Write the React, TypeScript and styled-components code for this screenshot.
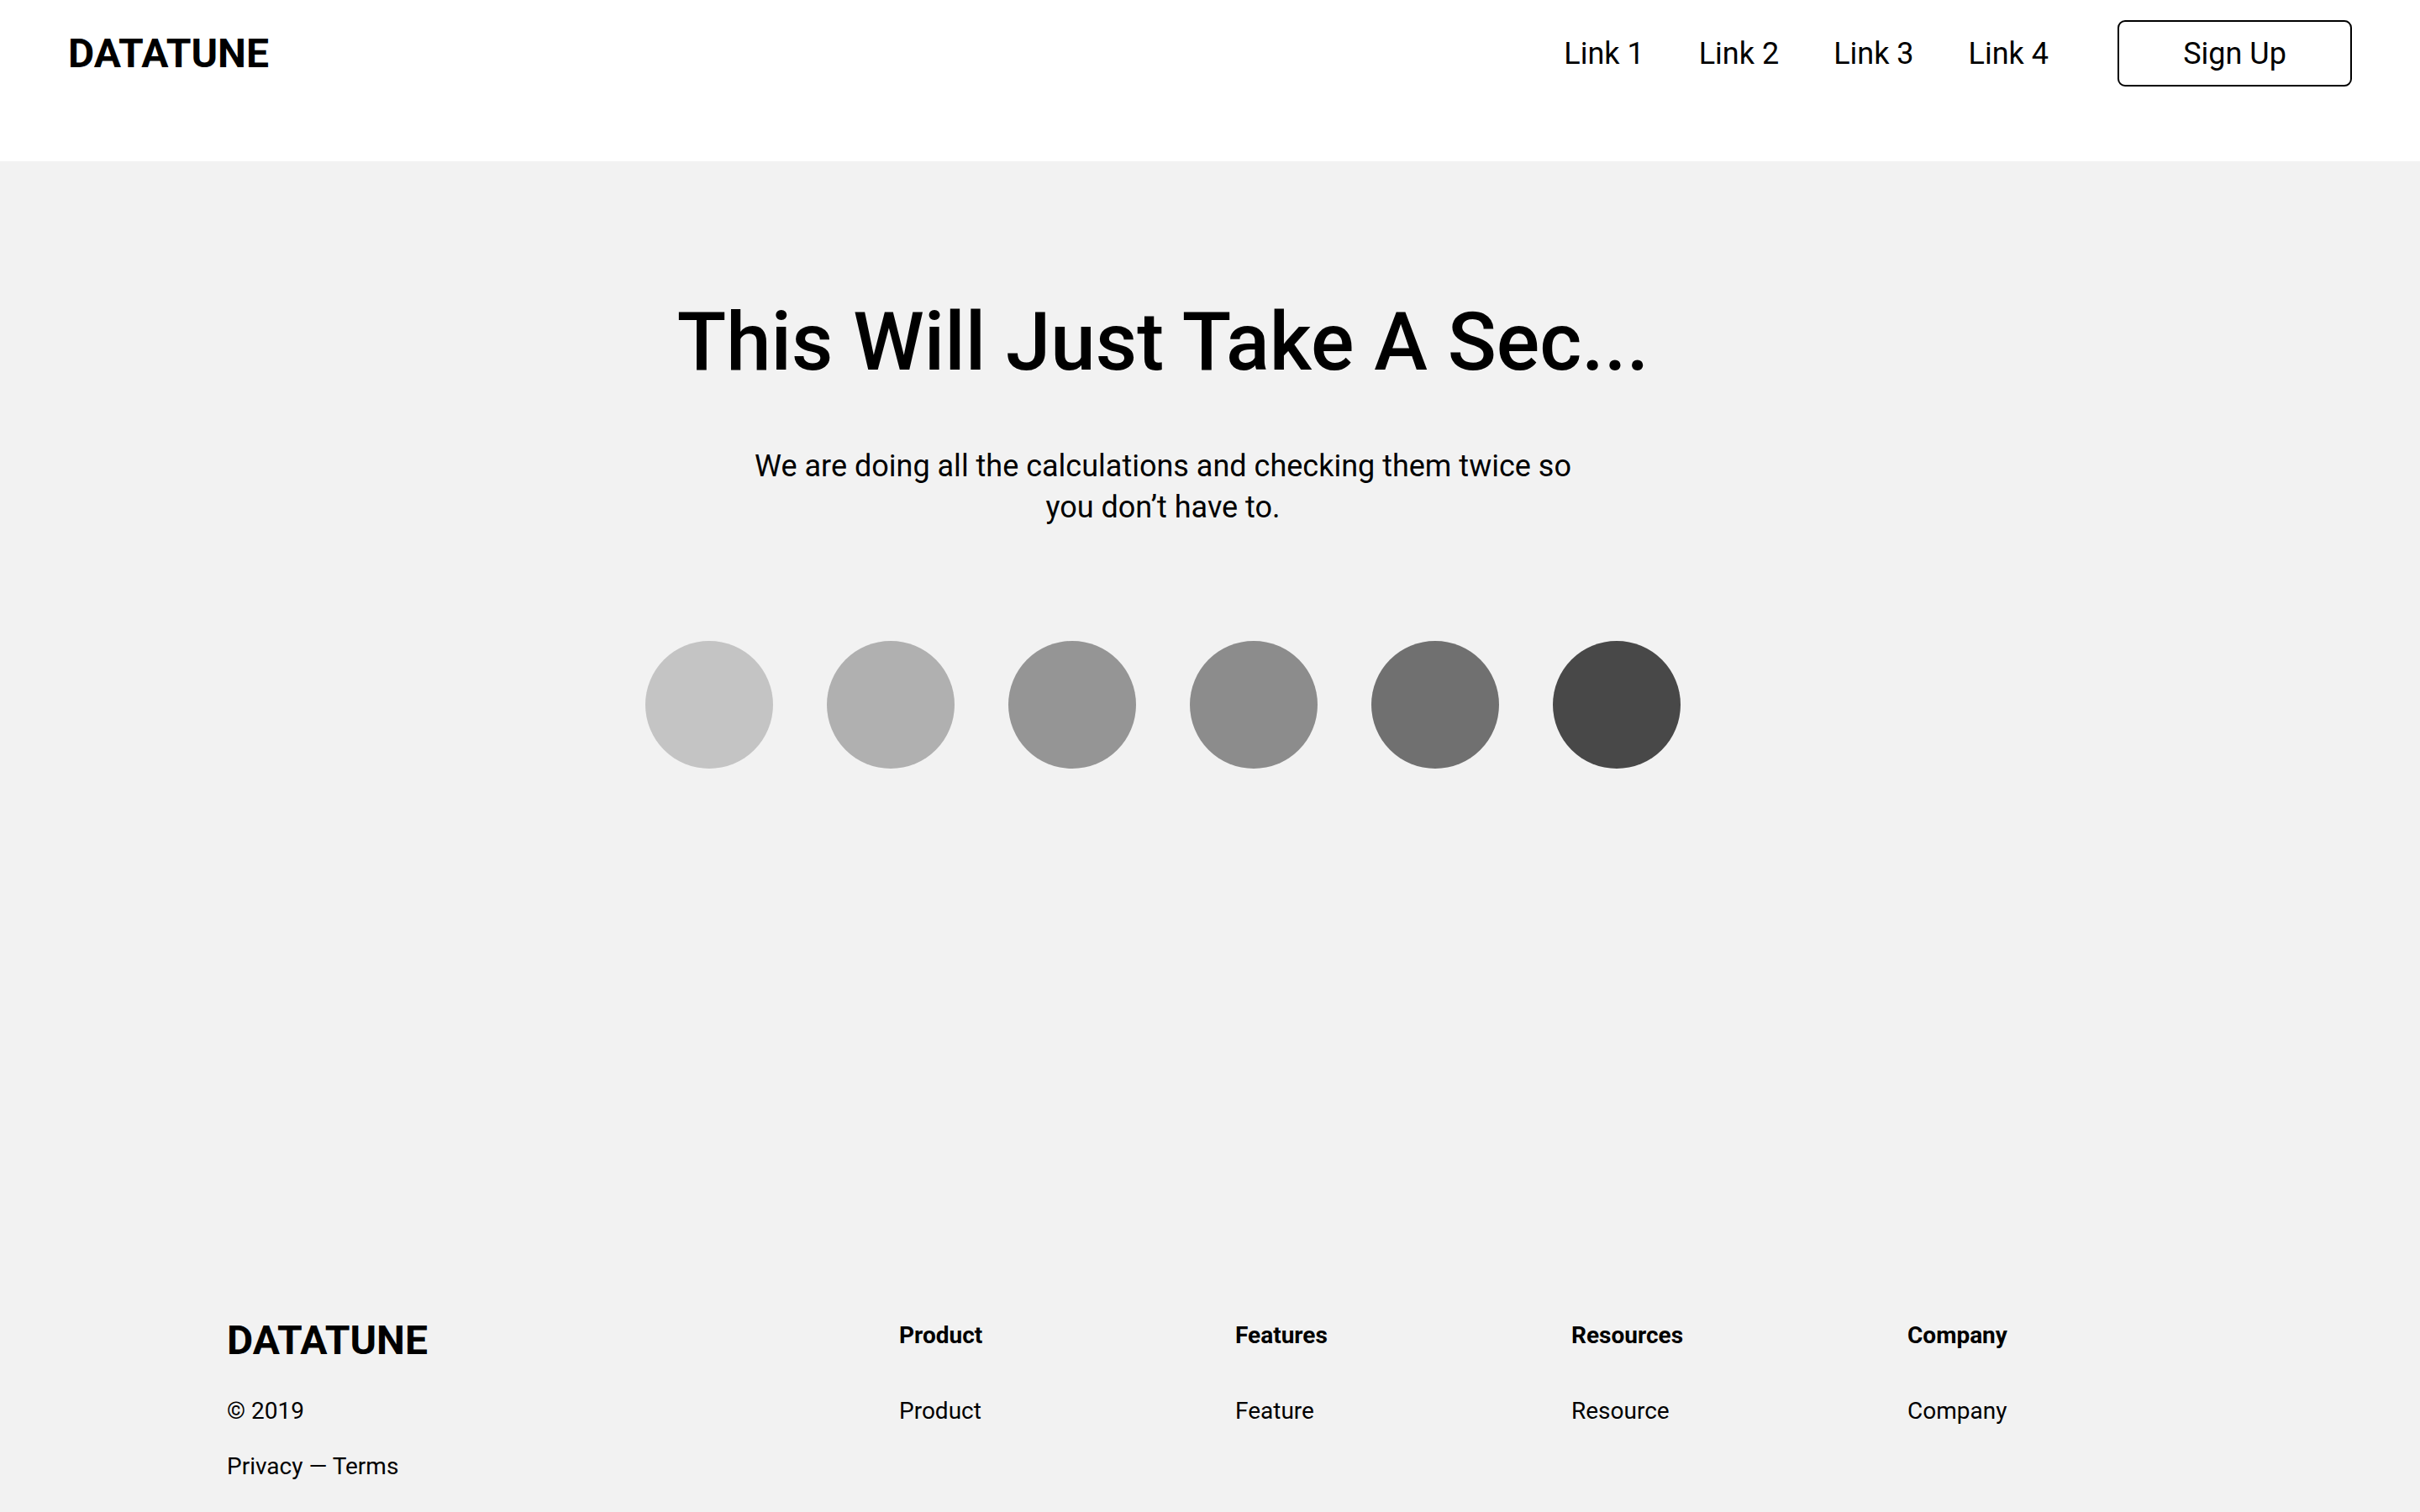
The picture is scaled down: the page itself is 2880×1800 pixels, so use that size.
import React from "react";
import styled, { createGlobalStyle } from "styled-components";

const GlobalStyle = createGlobalStyle`
  * { box-sizing: border-box; }
  html, body { margin: 0; padding: 0; }
  body {
    background: #f2f2f2;
    font-family: Roboto, "Liberation Sans", Arial, sans-serif;
    color: #000;
  }
`;

const Page = styled.div`
  display: flex;
  flex-direction: column;
  min-height: 100vh;
  background: #f2f2f2;
`;

const Header = styled.header`
  height: 192px;
  background: #fff;
  padding: 24px 81px 0 81px;
  display: flex;
  align-items: flex-start;
  justify-content: space-between;
`;

const HeaderRow = styled.div`
  flex: 1;
  height: 79px;
  display: flex;
  align-items: center;
  justify-content: space-between;
`;

const Logo = styled.div`
  font-weight: 700;
  font-size: 48px;
  line-height: 56px;
  color: #000;
`;

const Nav = styled.nav`
  display: flex;
  align-items: center;
  gap: 65px;
`;

const NavLink = styled.a`
  font-size: 36px;
  line-height: 44px;
  color: #000;
  text-decoration: none;
  font-weight: 400;
`;

const SignUp = styled.button`
  margin-left: 17px;
  width: 279px;
  height: 79px;
  border: 2px solid #000;
  border-radius: 9px;
  background: #fff;
  font-family: inherit;
  font-size: 36px;
  color: #000;
  cursor: pointer;
`;

const Main = styled.main`
  display: flex;
  flex-direction: column;
  align-items: center;
  padding: 158px 112px 0 0;
`;

const Title = styled.h1`
  margin: 0;
  font-size: 96px;
  line-height: 115px;
  font-weight: 500;
  text-align: center;
  color: #000;
`;

const Lead = styled.p`
  margin: 66px 0 0;
  max-width: 1010px;
  font-size: 36px;
  line-height: 49px;
  text-align: center;
  color: #000;
`;

const Dots = styled.div`
  margin-top: 134px;
  display: flex;
  gap: 64px;
`;

const Dot = styled.span<{ $shade: string }>`
  display: block;
  width: 152px;
  height: 152px;
  border-radius: 50%;
  background: ${(p) => p.$shade};
`;

const Footer = styled.footer`
  margin-top: 653px;
  padding: 0 0 40px 270px;
  display: grid;
  grid-template-columns: 800px 400px 400px 400px 400px;
  align-items: start;
`;

const Brand = styled.div`
  display: flex;
  flex-direction: column;
`;

const Small = styled.div<{ $gap: number }>`
  margin-top: ${(p) => p.$gap}px;
  font-size: 28px;
  line-height: 32px;
  color: #000;
`;

const Column = styled.div`
  display: flex;
  flex-direction: column;
`;

const ColTitle = styled.div`
  font-size: 28px;
  line-height: 43px;
  font-weight: 700;
  color: #000;
`;

const shades = ["#c4c4c4", "#b0b0b0", "#959595", "#8c8c8c", "#707070", "#484848"];

const columns = [
  ["Product", "Product"],
  ["Features", "Feature"],
  ["Resources", "Resource"],
  ["Company", "Company"],
];

export default function App() {
  return (
    <Page>
      <GlobalStyle />
      <Header>
        <HeaderRow>
          <Logo>DATATUNE</Logo>
          <Nav>
            <NavLink href="#">Link 1</NavLink>
            <NavLink href="#">Link 2</NavLink>
            <NavLink href="#">Link 3</NavLink>
            <NavLink href="#">Link 4</NavLink>
            <SignUp>Sign Up</SignUp>
          </Nav>
        </HeaderRow>
      </Header>
      <Main>
        <Title>This Will Just Take A Sec...</Title>
        <Lead>
          We are doing all the calculations and checking them twice so you don’t have to.
        </Lead>
        <Dots>
          {shades.map((s) => (
            <Dot key={s} $shade={s} />
          ))}
        </Dots>
      </Main>
      <Footer>
        <Brand>
          <Logo>DATATUNE</Logo>
          <Small $gap={40}>© 2019</Small>
          <Small $gap={34}>Privacy — Terms</Small>
        </Brand>
        {columns.map(([title, item]) => (
          <Column key={title}>
            <ColTitle>{title}</ColTitle>
            <Small $gap={53}>{item}</Small>
          </Column>
        ))}
      </Footer>
    </Page>
  );
}
